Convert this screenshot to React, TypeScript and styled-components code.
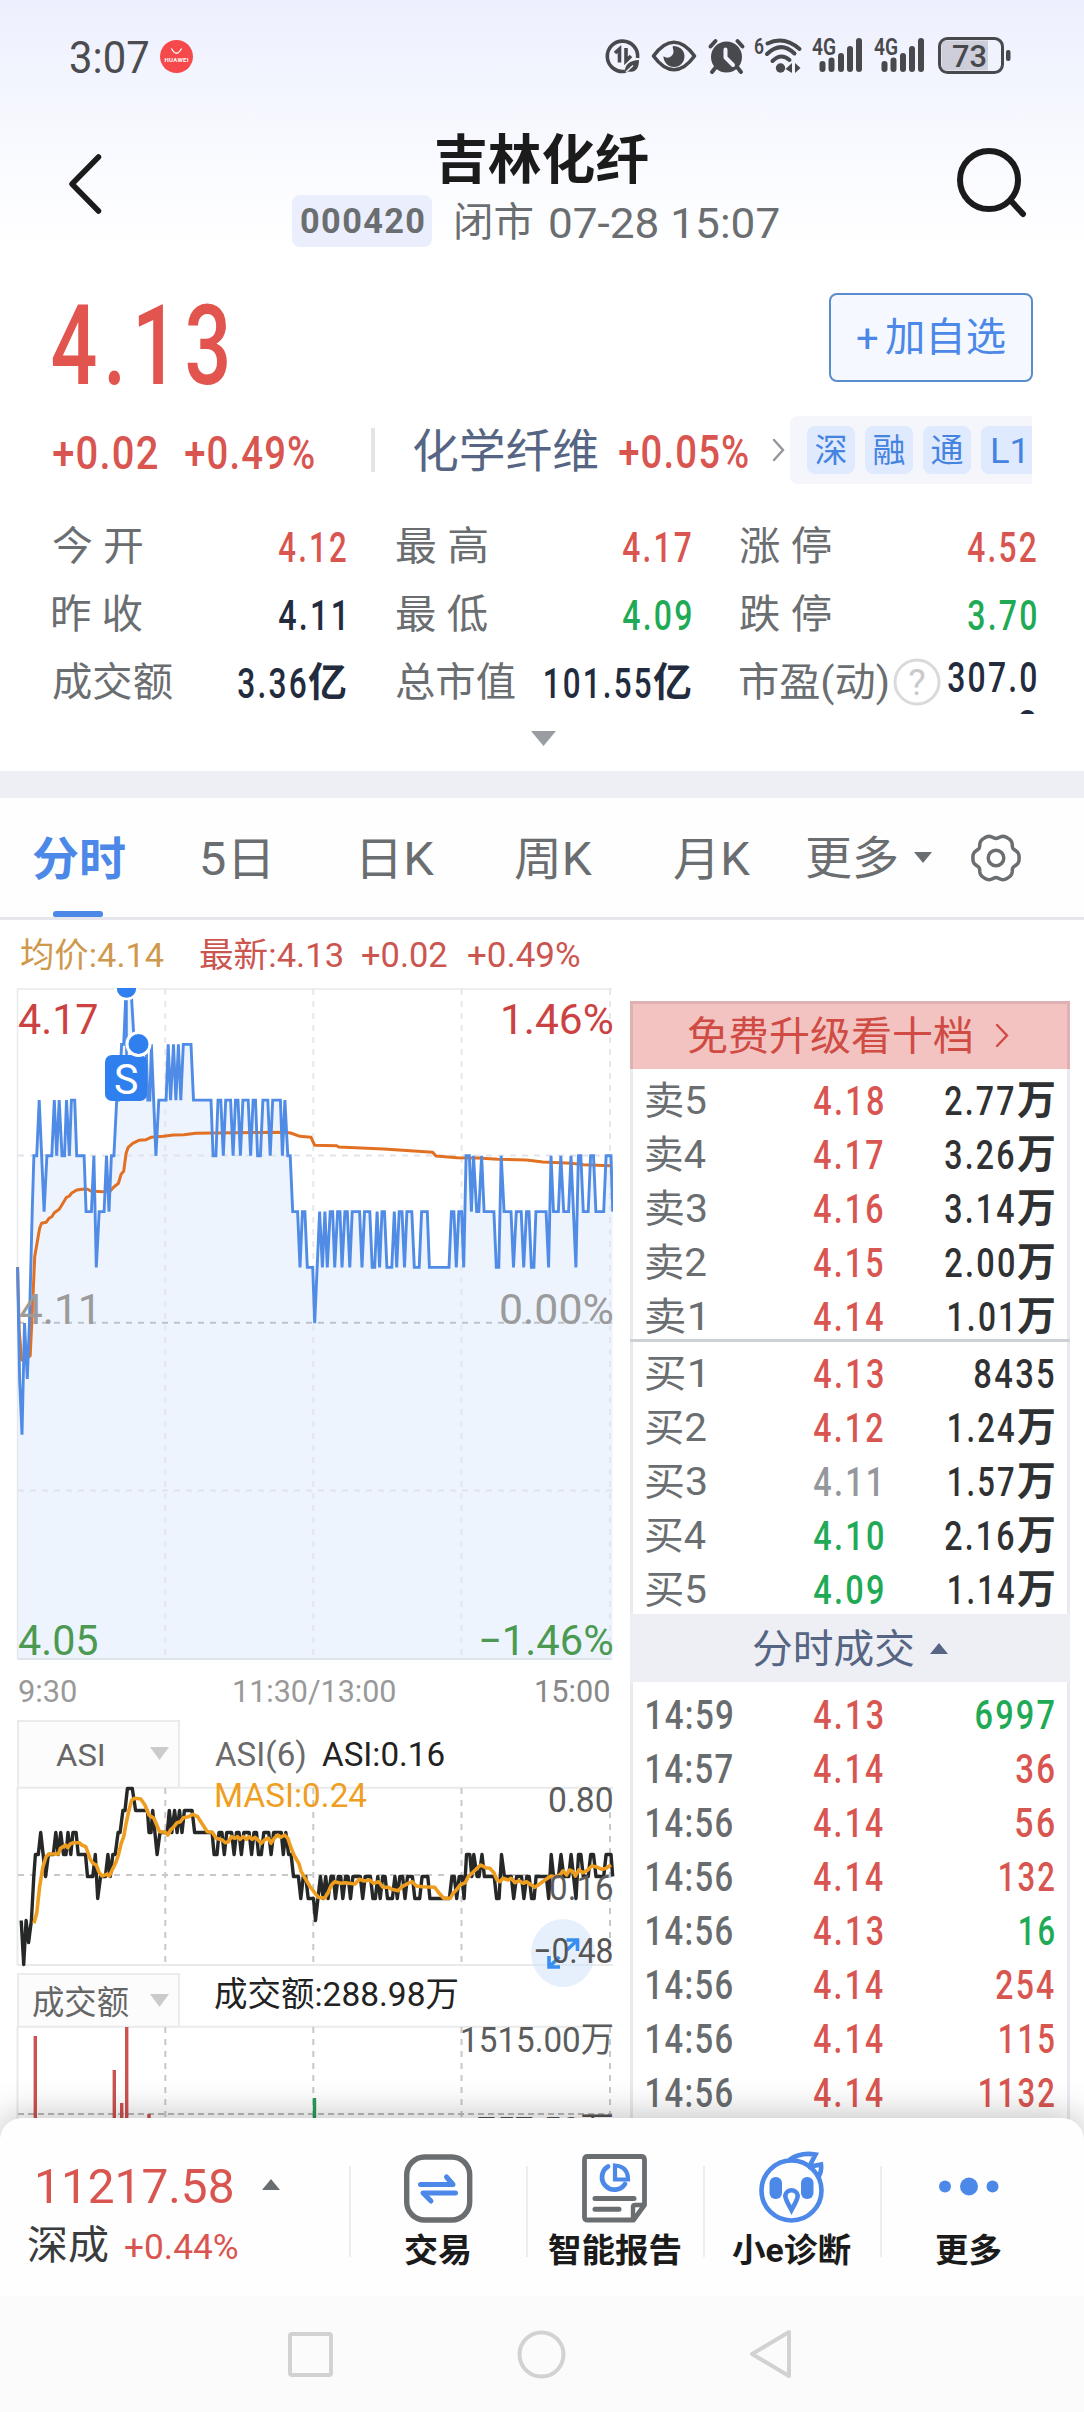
import React, { useLayoutEffect, useRef } from "react";
import styled, { createGlobalStyle } from "styled-components";

const FONT = 'Roboto, "Noto Sans CJK SC", sans-serif';

const C = {
  red: "#d95550",
  green: "#20aa56",
  blue: "#4c88e8",
  dark: "#232b3e",
  gray: "#6b6e71",
  slate: "#566583",
};

const Global = createGlobalStyle`
  * { box-sizing: border-box; }
  body { margin: 0; background: #fff; font-family: ${FONT}; }
  svg { display: block; flex: none; overflow: visible; }
`;

/* ---------- text whose ink is fitted to a given width ---------- */

const FitBox = styled.span<{ $w: number; $ml: number; $size: number; $weight: number; $color: string }>`
  display: inline-block;
  flex: none;
  width: ${(p) => p.$w}px;
  margin-left: ${(p) => p.$ml}px;
  height: ${(p) => Math.round(p.$size * 1.2)}px;
  line-height: ${(p) => Math.round(p.$size * 1.2)}px;
  font-size: ${(p) => p.$size}px;
  font-weight: ${(p) => p.$weight};
  color: ${(p) => p.$color};
  white-space: pre;
`;

const FitInner = styled.span<{ $ls: number }>`
  display: inline-block;
  transform-origin: 0 50%;
  letter-spacing: ${(p) => p.$ls}px;
`;

type FitProps = {
  t: string;
  w: number;
  size: number;
  weight?: number;
  color?: string;
  ml?: number;
  dy?: number;
  ls?: number;
};

function Fit({ t, w, size, weight = 400, color = C.gray, ml = 0, dy = 1, ls = 0 }: FitProps) {
  const ref = useRef<HTMLSpanElement>(null);
  const track = ls * size;
  useLayoutEffect(() => {
    const el = ref.current;
    const ctx = document.createElement("canvas").getContext("2d");
    if (!el || !ctx) return;
    ctx.font = `${weight} ${size}px ${FONT}`;
    const m = ctx.measureText(t);
    const ink = m.actualBoundingBoxLeft + m.actualBoundingBoxRight + track * (t.length - 1);
    const s = w / ink;
    el.style.transform = `translate(${m.actualBoundingBoxLeft * s}px, ${dy}px) scaleX(${s})`;
  }, [t, w, size, weight, dy, track]);
  return (
    <FitBox $w={w} $ml={ml} $size={size} $weight={weight} $color={color}>
      <FitInner ref={ref} $ls={track}>{t}</FitInner>
    </FitBox>
  );
}

/* condensed, slightly tracked figures used for quotes */
const Num = (p: FitProps) => <Fit weight={500} ls={0.07} {...p} />;

/* ---------- layout parts ---------- */

const Page = styled.div`
  width: 1084px;
  height: 2412px;
  overflow: hidden;
  display: flex;
  flex-direction: column;
  background: linear-gradient(#edeffe 0, #f3f5fe 80px, #fafbff 170px, #fff 255px);
`;

const Row = styled.div<{ $h: number; $pl?: number }>`
  display: flex;
  align-items: center;
  flex: none;
  height: ${(p) => p.$h}px;
  padding-left: ${(p) => p.$pl ?? 0}px;
`;

const Slot = styled.div<{ $ml?: number; $mt?: number }>`
  flex: none;
  margin-left: ${(p) => p.$ml ?? 0}px;
  margin-top: ${(p) => p.$mt ?? 0}px;
`;

const TitleColumn = styled.div`
  align-self: flex-start;
  width: 488px;
  margin-left: 190px;
  display: flex;
  flex-direction: column;
`;

const CodeBadge = styled.div`
  width: 140px;
  height: 52px;
  border-radius: 8px;
  background: #ebeffd;
  display: flex;
  align-items: center;
  justify-content: center;
`;

const AddButton = styled.div`
  width: 204px;
  height: 89px;
  margin-left: 602px;
  border: 2px solid #5a8dce;
  border-radius: 8px;
  background: #f5f9ff;
  display: flex;
  align-items: center;
  padding-left: 26px;
`;

const VLine = styled.div<{ $ml: number; $w: number; $h: number; $c: string }>`
  flex: none;
  width: ${(p) => p.$w}px;
  height: ${(p) => p.$h}px;
  margin-left: ${(p) => p.$ml}px;
  background: ${(p) => p.$c};
`;

const TagStrip = styled.div`
  width: 242px;
  height: 68px;
  margin-left: 5px;
  padding-left: 17px;
  border-radius: 8px 0 0 8px;
  background: #f4f6fb;
  display: flex;
  align-items: center;
  gap: 10px;
  overflow: hidden;
`;

const Tag = styled.div`
  flex: none;
  width: 48px;
  height: 48px;
  border-radius: 8px;
  background: #dfeafe;
  display: flex;
  align-items: center;
  justify-content: center;
  &:last-child { width: 60px; padding-right: 8px; }
`;

const Stats = styled.div`
  flex: none;
  height: 202px;
  margin-top: 16px;
  padding-left: 53px;
  display: grid;
  grid-template-columns: 343px 344px 296px;
  grid-auto-rows: 68px;
  overflow: hidden;
`;

const Stat = styled.div<{ $w: number }>`
  width: ${(p) => p.$w}px;
  height: 68px;
  display: flex;
  align-items: center;
`;

const StatValue = styled.div<{ $pr: number }>`
  margin-left: auto;
  padding-right: ${(p) => p.$pr}px;
  display: flex;
  align-items: center;
`;

const WrappedValue = styled.div`
  margin-left: auto;
  display: flex;
  flex-direction: column;
  align-items: flex-end;
  height: 68px;
  padding-top: 5px;
`;

const Band = styled.div`
  flex: none;
  height: 27px;
  background: #eeeff5;
`;

const Tabs = styled(Row)`
  border-bottom: 3px solid #e5e7ec;
  background: #fefefe;
`;

const ActiveTab = styled.div`
  display: flex;
  flex-direction: column;
  width: 92px;
  height: 119px;
  padding-top: 32px;
  justify-content: space-between;
  &::after {
    content: "";
    width: 50px;
    height: 6px;
    margin-left: 20px;
    border-radius: 3px 3px 2px 2px;
    background: ${C.blue};
  }
`;

const Main = styled.div`
  flex: none;
  height: 1152px;
  display: flex;
  align-items: flex-start;
  overflow: hidden;
`;

const Left = styled.div`
  width: 613px;
  flex: none;
`;

const Plot = styled.div<{ $h: number }>`
  position: relative;
  height: ${(p) => p.$h}px;
`;

const Over = styled.div<{ $y: number; $left?: boolean }>`
  position: absolute;
  top: ${(p) => p.$y}px;
  ${(p) => (p.$left ? "left: 0;" : "right: 1px;")}
  transform: translateY(-50%);
  display: flex;
`;

const SellMark = styled.div`
  position: absolute;
  left: 105px;
  top: 67px;
  width: 42px;
  height: 46px;
  border-radius: 7px;
  background: #2f80ee;
  display: flex;
  align-items: center;
  justify-content: center;
`;

const ExpandButton = styled.div`
  position: absolute;
  left: 531px;
  top: 132px;
  width: 64px;
  height: 68px;
  border-radius: 50%;
  background: rgba(205, 226, 250, 0.5);
`;

const IndicatorHead = styled.div<{ $h: number }>`
  display: flex;
  align-items: center;
  height: ${(p) => p.$h}px;
  padding-left: 17px;
`;

const Picker = styled.div<{ $pl: number }>`
  flex: none;
  width: 163px;
  height: 100%;
  padding-left: ${(p) => p.$pl}px;
  border: 2px solid #ebebeb;
  border-bottom: 0;
  background: #fcfcfc;
  display: flex;
  align-items: center;
`;

const Panel = styled.div`
  flex: none;
  width: 440px;
  margin: 13px 0 0 17px;
  height: 1140px;
  border: solid #e9eaef;
  border-width: 0 3px;
`;

const Upgrade = styled.div`
  height: 68px;
  margin: 0 -3px;
  padding-left: 55px;
  background: #f2c3c1;
  border: 3px solid #dfb1b4;
  border-bottom: 0;
  display: flex;
  align-items: center;
`;

const Orders = styled.div<{ $line?: boolean; $pt: number; $h: number }>`
  height: ${(p) => p.$h}px;
  padding-top: ${(p) => p.$pt}px;
  margin: 0 -3px;
  border-bottom: ${(p) => (p.$line ? "3px solid #cdd1d5" : "0")};
`;

const Line = styled.div`
  height: 54px;
  padding: 0 16px;
  display: grid;
  grid-template-columns: 168px 69px 1fr;
  align-items: center;
`;

const RightCell = styled.div`
  display: flex;
  justify-content: flex-end;
`;

const DealsHead = styled.div`
  height: 68px;
  margin: 0 -3px;
  padding-left: 123px;
  background: #eeeff5;
  display: flex;
  align-items: center;
`;

const BottomBar = styled.div`
  position: relative;
  flex: none;
  height: 178px;
  margin-top: -22px;
  border-radius: 22px 22px 0 0;
  background: #fefefe;
  box-shadow: 0 -2px 36px rgba(0, 0, 0, 0.26);
  display: flex;
`;

const IndexBox = styled.div`
  width: 349px;
  padding-top: 37px;
`;

const Action = styled.div`
  position: relative;
  width: 177px;
  height: 178px;
  padding-top: 31px;
  display: flex;
  flex-direction: column;
  align-items: center;
  &::before {
    content: "";
    position: absolute;
    left: 0;
    top: 48px;
    width: 2px;
    height: 91px;
    background: #ededed;
  }
`;

const IconArea = styled.div`
  height: 79px;
  display: flex;
`;

const NavBar = styled.div`
  position: relative;
  flex: none;
  height: 116px;
  padding-left: 288px;
  background: #fbfbfb;
  display: flex;
  align-items: center;
`;

/* ---------- icons ---------- */

const INK = "#48494c";

const Tri = ({ w, h, c, up }: { w: number; h: number; c: string; up?: boolean }) => (
  <svg width={w} height={h} viewBox="0 0 10 10" preserveAspectRatio="none">
    <path d={up ? "M0 10H10L5 0Z" : "M0 0H10L5 10Z"} fill={c} />
  </svg>
);

const Chevron = ({ w, h, c, s }: { w: number; h: number; c: string; s: number }) => (
  <svg width={w} height={h} viewBox={`0 0 ${w} ${h}`}>
    <path d={`M2 2L${w - 2} ${h / 2}L2 ${h - 2}`} fill="none" stroke={c} strokeWidth={s} strokeLinecap="round" />
  </svg>
);

const Signal = () => (
  <svg width="52" height="38" viewBox="0 0 52 38">
    <text x="0" y="17.500" fontSize="23" fontWeight="600" fill={INK} textLength="24" lengthAdjust="spacingAndGlyphs" fontFamily="Roboto, sans-serif">4G</text>
    <g fill={INK}>
      <rect x="7.500" y="24" width="6" height="11" rx="3" />
      <rect x="16.500" y="20.500" width="6" height="14.500" rx="3" />
      <rect x="26" y="16" width="6" height="19" rx="3" />
      <rect x="35" y="9" width="6" height="26" rx="3" />
      <rect x="44" y="1" width="6" height="34" rx="3" />
    </g>
  </svg>
);

const StatusIcons = () => (
  <>
    <svg width="36" height="36" viewBox="0 0 36 36">
      <path d="M20 33.3A15.2 15.2 0 1 1 32.6 20" fill="none" stroke={INK} strokeWidth="3.6" />
      <path d="M10 15L14.500 11V24.500M21 10V23L26 18" fill="none" stroke={INK} strokeWidth="3.600" />
      <path d="M20 35C19 27 25 22 34 22C34 31 30 35 24 33.5Z" fill={INK} />
      <path d="M21 34L28 27.500" stroke="#f1f3fe" strokeWidth="1.500" />
    </svg>
    <Slot $ml={10}>
      <svg width="46" height="32" viewBox="0 0 46 32">
        <path d="M2.500 16C9 7 15.500 2.300 23 2.300S37 7 43.500 16C37 25 30.500 29.700 23 29.700S9 25 2.500 16Z" fill="none" stroke={INK} strokeWidth="3.6" strokeLinejoin="round" />
        <path d="M22 6A10.500 10.500 0 1 1 12.500 16C16 19.500 22 17 22.500 12C22.800 9.500 21 7.500 22 6Z" fill={INK} />
      </svg>
    </Slot>
    <Slot $ml={11}>
      <svg width="37" height="36" viewBox="0 0 37 36">
        <circle cx="18.500" cy="19" r="15.500" fill={INK} />
        <path d="M2.500 8.500L7.500 3M34.500 8.500L29.500 3M8 29L4 34M29 29L33 34" stroke={INK} strokeWidth="4" strokeLinecap="round" />
        <path d="M17.500 11.500V19.500L25 27" fill="none" stroke="#f1f3fe" strokeWidth="4" strokeLinecap="round" strokeLinejoin="round" />
      </svg>
    </Slot>
    <Slot $ml={9}>
      <svg width="49" height="38" viewBox="0 0 49 38">
        <text x="0" y="17" fontSize="22" fontWeight="600" fill={INK} textLength="10" lengthAdjust="spacingAndGlyphs" fontFamily="Roboto, sans-serif">6</text>
        <g fill="none" stroke={INK} strokeWidth="4" strokeLinecap="round">
          <path d="M13.500 6.500Q30 -1.500 45.500 12" />
          <path d="M13 17Q27 3.500 40.500 16.500" />
          <path d="M18.500 24Q27 15.500 35.500 23" />
        </g>
        <circle cx="26.500" cy="31" r="4.700" fill={INK} />
        <path d="M31.500 32L38 26V36M41 26V36L46.500 31Z" fill={INK} />
      </svg>
    </Slot>
    <Slot $ml={9}><Signal /></Slot>
    <Slot $ml={10}><Signal /></Slot>
    <Slot $ml={12}>
      <svg width="74" height="38" viewBox="0 0 74 38">
        <rect x="1.500" y="1.500" width="63" height="34" rx="8" fill="#f0f2fd" stroke={INK} strokeWidth="3" />
        <path d="M9 3.500H50V33.500H9Q3.500 33.500 3.500 28V9Q3.500 3.500 9 3.500Z" fill="#cdced9" />
        <rect x="68" y="13" width="4.500" height="11" rx="2" fill={INK} />
        <text x="14" y="29.500" fontSize="31" fontWeight="500" fill={INK} textLength="35" lengthAdjust="spacingAndGlyphs" fontFamily="Roboto, sans-serif">73</text>
      </svg>
    </Slot>
  </>
);

const gearPath = (() => {
  const pts: string[] = [];
  for (let i = 0; i < 120; i++) {
    const a = (i / 120) * Math.PI * 2;
    const r = 21.8 + 1.8 * Math.cos(6 * a) - 0.5 * Math.cos(12 * a);
    pts.push(`${(26 + r * Math.cos(a)).toFixed(2)} ${(26 + r * Math.sin(a)).toFixed(2)}`);
  }
  return `M${pts.join("L")}Z`;
})();

/* ---------- intraday series: [x, price in cents over 4.00] ---------- */

const RAW =
  "43,12 48,10 54,9 60,11 67,10 72,11 79,13 83,14 90,14 96,15 108,13 115,14 127,14 133,15 139,14 145,15 152,14 158,14 163,15 170,14 175,15 183,15 188,14 206,14 211,13 224,13 230,14 236,12 243,13 255,13 261,14 267,13 273,14 279,14 286,15 291,15 298,16 303,16 309,17 321,17 329,16 358,16 362,15 367,15 371,16 382,14 389,15 407,15 412,16 418,15 425,16 431,15 437,16 443,15 449,16 468,16 474,15 517,15 522,14 529,14 534,15 541,15 547,14 553,15 565,15 571,14 577,15 583,15 589,14 595,15 608,15 614,14 620,15 626,15 631,14 638,14 644,15 656,15 662,14 668,15 687,15 692,14 698,15 705,14 711,14 717,13 729,13 735,12 741,13 747,13 753,12 766,12 771,11 783,13 790,12 796,13 802,12 809,13 815,13 820,12 827,13 833,13 838,12 845,13 851,13 857,12 863,13 881,13 887,12 893,13 906,13 912,12 918,12 924,13 930,12 936,13 942,13 948,12 960,12 966,13 972,12 978,13 985,13 991,12 997,13 1009,13 1015,12 1027,12 1033,13 1047,13 1052,12 1100,12 1106,13 1112,13 1118,12 1124,13 1131,13 1136,12 1142,14 1150,14 1155,13 1160,14 1168,13 1173,13 1180,14 1186,13 1210,13 1216,12 1222,12 1228,14 1235,13 1252,13 1258,12 1265,13 1277,13 1283,12 1290,13 1296,13 1302,12 1308,12 1313,13 1338,13 1344,12 1350,14 1356,13 1368,13 1374,14 1381,13 1393,13 1399,14 1411,12 1417,14 1423,14 1429,13 1441,13 1447,14 1454,14 1460,13 1479,13 1485,14 1497,14 1501,13";
const AVG =
  "43,891 47,1080 53,1170 62,1168 74,1157 80,1000 85,860 92,810 97,775 102,760 113,757 120,745 127,740 133,728 145,718 152,704 163,682 170,678 175,670 188,660 206,657 215,658 222,663 252,665 270,663 279,651 290,640 297,612 303,604 309,550 314,532 325,520 340,511 358,509 370,502 400,499 425,495 450,494 480,490 520,489 700,487 712,489 735,499 762,502 771,526 825,527 830,531 940,537 1060,547 1068,558 1120,563 1170,564 1220,568 1290,570 1330,576 1400,580 1430,584 1497,587";
const MASI =
  "83,670 90,640 97,560 105,500 113,470 120,462 143,462 148,445 155,440 160,435 166,443 172,432 180,428 195,428 200,435 210,440 216,460 222,480 228,490 236,495 242,515 250,528 257,525 262,522 268,528 275,510 283,490 290,465 297,430 303,410 309,370 316,330 323,300 330,295 345,297 355,315 365,345 377,355 384,375 391,395 405,397 411,405 418,390 426,380 434,368 442,365 449,353 462,350 472,343 484,350 492,365 508,395 520,397 530,415 545,420 552,428 560,425 567,410 575,415 582,410 588,418 596,410 604,418 610,410 618,418 625,412 632,420 640,430 650,418 658,415 664,430 672,415 680,405 688,412 697,405 705,415 712,440 720,465 732,490 738,515 750,540 760,560 772,580 780,592 795,595 803,580 812,555 820,545 835,550 845,548 870,552 880,538 893,543 906,540 915,550 928,545 938,562 952,562 960,568 975,572 985,560 1000,550 1010,545 1020,558 1035,560 1065,562 1075,578 1087,595 1103,595 1110,580 1118,570 1127,555 1140,548 1147,530 1160,515 1170,503 1178,495 1190,503 1200,505 1210,518 1218,540 1225,545 1232,535 1245,540 1252,535 1262,548 1272,542 1282,550 1290,545 1302,555 1310,562 1322,552 1335,540 1350,528 1360,530 1372,525 1380,513 1388,525 1395,510 1404,515 1410,528 1418,510 1428,518 1438,512 1450,498 1460,500 1475,508 1485,505 1497,495";

const KX = 2.45;
const parse = (s: string) => s.split(" ").map((p) => p.split(",").map(Number));
const poly = (pts: number[][]) => pts.map(([x, y]) => `${x.toFixed(1)},${y.toFixed(1)}`).join(" ");
const series = parse(RAW);
const priceLine = poly(series.map(([x, l]) => [x / KX, (17 - l) * 55.75 + 0.6]));
const avgLine = poly(parse(AVG).map(([x, y]) => [x / KX, y / 3 - 18]));
const asiLine = poly(
  [[52, 11], [58, 9], [64, 11], [70, 10], [77, 11], ...series.slice(6)].map(([x, l], i) => [
    (i < 5 ? x : x + 4 * (1 - x / 1500)) / KX,
    (17 - l) * 22 + 1.5,
  ])
);
const masiLine = poly(parse(MASI).map(([x, y]) => [x / KX, y / 3 - 87]));
const GRID_X = [165.3, 313.3, 461.5, 610];

const PricePlot = () => (
  <svg width="613" height="672" viewBox="0 0 613 672" style={{ overflow: "hidden" }}>
    <polygon points={`17.500,671 ${priceLine} 612.5,671`} fill="#edf4fe" />
    <path d="M17.500 671V1H612" fill="none" stroke="#e8e9ec" strokeWidth="1.500" />
    <path d="M17.500 671H612" stroke="#dfe4ed" strokeWidth="2" />
    {GRID_X.map((x) => (
      <path key={x} d={`M${x} 1V671`} stroke="#dfe3ea" strokeOpacity=".85" strokeWidth="2" strokeDasharray="6 6" />
    ))}
    <path d="M18 167.500H612M18 502.500H612" stroke="#dfe3ea" strokeWidth="2" strokeDasharray="6 6" />
    <path d="M18 334.800H612" stroke="#bcc2cb" strokeWidth="2" strokeDasharray="6 6" />
    <polyline points={avgLine} fill="none" stroke="#e27022" strokeWidth="3" strokeLinejoin="round" />
    <polyline points={priceLine} fill="none" stroke="#508ce6" strokeWidth="2.900" />
    <path d="M126.500 0V70" stroke="#4a88e8" strokeWidth="2.5" />
    <circle cx="126.500" cy="0" r="11" fill="#2f80ee" stroke="#fff" strokeWidth="2.500" />
  </svg>
);

const AsiPlot = () => (
  <svg width="613" height="180" viewBox="0 0 613 180">
    <path d="M17.500 178V0.700H613M17.500 178H613" fill="none" stroke="#e9eaec" strokeWidth="2" />
    {GRID_X.map((x) => (
      <path key={x} d={`M${x} 1V178`} stroke="#c8c8c8" strokeWidth="2" strokeDasharray="6 6" />
    ))}
    <path d="M18 88H612" stroke="#c8c8c8" strokeWidth="2" strokeDasharray="6 6" />
    <polyline points={asiLine} fill="none" stroke="#262827" strokeWidth="3.400" strokeLinejoin="round" />
    <polyline points={masiLine} fill="none" stroke="#ee9d1e" strokeWidth="3.600" strokeLinejoin="round" />
  </svg>
);

const BARS = [
  [35.3, 10, "#cc5250"],
  [114.3, 44, "#cc5250"],
  [121.7, 77, "#cc5250"],
  [126.7, 1, "#cc5250"],
  [149, 88, "#cc5250"],
  [314.500, 72, "#2a9d58"],
] as [number, number, string][];

const VolumePlot = () => (
  <svg width="613" height="110" viewBox="0 0 613 110">
    <path d="M17.500 110V0.700H613" fill="none" stroke="#e9eaec" strokeWidth="2" />
    {GRID_X.map((x) => (
      <path key={x} d={`M${x} 1V110`} stroke="#c8c8c8" strokeWidth="2" strokeDasharray="6 6" />
    ))}
    <path d="M18 88H612" stroke="#bdbdbd" strokeWidth="2" strokeDasharray="6 4" />
    {BARS.map(([x, y, c]) => (
      <rect key={x} x={x - 1.700} y={y} width="3.400" height={110 - y} fill={c} />
    ))}
  </svg>
);

const TradeIcon = () => (
  <svg width="72" height="76" viewBox="0 0 72 76">
    <rect x="4.700" y="8" width="63" height="63" rx="18" fill="none" stroke={C.gray} strokeWidth="5.400" />
    <path d="M18.500 35.500H51L44.500 28M53.500 44H21L29 52" fill="none" stroke={C.blue} strokeWidth="5" strokeLinecap="round" strokeLinejoin="round" />
  </svg>
);

const ReportIcon = () => (
  <svg width="72" height="76" viewBox="0 0 72 76">
    <path d="M8 7.500H62Q65.500 7.500 65.500 11V56L54.500 71H8Q5.500 71 5.500 68V11Q5.500 7.500 8 7.500Z" fill="none" stroke={C.gray} strokeWidth="4.800" strokeLinejoin="round" />
    <path d="M54 70V58Q54 56 56 56H65" fill="none" stroke={C.gray} strokeWidth="4.400" />
    <path d="M16 49.500H55M16 60.300H40" stroke={C.gray} strokeWidth="5" strokeLinecap="round" />
    <path d="M29 17.500A12.500 12.500 0 1 0 46 35" fill="none" stroke={C.blue} strokeWidth="4.800" strokeLinecap="round" />
    <path d="M36 16.500V30.500H49Q49 17.500 36 16.500Z" fill="none" stroke={C.blue} strokeWidth="4.200" />
  </svg>
);

const BirdIcon = () => (
  <svg width="72" height="76" viewBox="0 0 72 76">
    <g fill="none" stroke={C.blue} strokeWidth="4.600">
      <circle cx="35.500" cy="41.500" r="30" />
      <path d="M33 11Q44 3 59.500 5.500L53 18M52 18L65 15.500Q66 22 62 29" />
      <path d="M35.500 61C31.500 53.500 29 50 29.300 46.500A6.300 6.300 0 0 1 41.700 46.500C42 50 39.500 53.500 35.500 61Z" />
    </g>
    <rect x="13.500" y="28" width="12.500" height="22" rx="6" fill={C.blue} />
    <rect x="45" y="28" width="12.500" height="22" rx="6" fill={C.blue} />
  </svg>
);

const MoreIcon = () => (
  <svg width="72" height="76" viewBox="0 0 72 76" fill={C.blue}>
    <circle cx="12" cy="37.500" r="6" />
    <circle cx="36" cy="37.500" r="9" />
    <circle cx="59.500" cy="37.500" r="6" />
  </svg>
);

/* ---------- data ---------- */

type StatT = { l: string; lw: number; v: string; vw: number; c: string; unit?: boolean };
const STATS: StatT[] = [
  { l: "今 开", lw: 89, v: "4.12", vw: 67, c: C.red },
  { l: "最 高", lw: 91, v: "4.17", vw: 68, c: C.red },
  { l: "涨 停", lw: 91, v: "4.52", vw: 68, c: C.red },
  { l: "昨 收", lw: 89, v: "4.11", vw: 64, c: C.dark },
  { l: "最 低", lw: 91, v: "4.09", vw: 68, c: C.green },
  { l: "跌 停", lw: 91, v: "3.70", vw: 68, c: C.green },
  { l: "成交额", lw: 119, v: "3.36", vw: 68, c: C.dark, unit: true },
  { l: "总市值", lw: 119, v: "101.55", vw: 106, c: C.dark, unit: true },
];
const STAT_W = [293, 295, 296];

const SELL = [["卖5", "4.18", "2.77"], ["卖4", "4.17", "3.26"], ["卖3", "4.16", "3.14"], ["卖2", "4.15", "2.00"], ["卖1", "4.14", "1.01"]];
const BUY = [["买1", "4.13", "8435"], ["买2", "4.12", "1.24"], ["买3", "4.11", "1.57"], ["买4", "4.10", "2.16"], ["买5", "4.09", "1.14"]];
const DEALS: [string, string, string, boolean?][] = [
  ["14:59", "4.13", "6997", true],
  ["14:57", "4.14", "36"],
  ["14:56", "4.14", "56"],
  ["14:56", "4.14", "132"],
  ["14:56", "4.13", "16", true],
  ["14:56", "4.14", "254"],
  ["14:56", "4.14", "115"],
  ["14:56", "4.14", "1132"],
];

const priceColor = (p: string) => (p === "4.11" ? "#94979b" : Number(p) < 4.11 ? C.green : C.red);
const priceWidth = (p: string) => (p === "4.11" ? 64 : 69);

const OrderLine = ({ d }: { d: string[] }) => {
  const lots = !d[2].includes(".");
  const lead = d[2].startsWith("1") ? 4 : 0;
  const tail = d[2].endsWith("1") ? 4 : 0;
  return (
    <Line>
      <Fit t={d[0]} w={d[0].endsWith("1") ? 56 : 60} size={39} />
      <Num t={d[1]} w={priceWidth(d[1])} size={40} color={priceColor(d[1])} dy={2} />
      <RightCell>
        <Num t={d[2]} w={lots ? 79 : 69 - lead - tail} size={40} color="#303133" dy={2} />
        {!lots && <Fit t="万" w={37} size={40} weight={700} color="#303133" ml={3 + tail} />}
      </RightCell>
    </Line>
  );
};

const dealWidth = (v: string) => v.length * 20 - 2 - (v.startsWith("1") ? 4 : 0);

export default function App() {
  return (
    <Page>
      <Global />
      <Row $h={112} $pl={71}>
        <Fit t="3:07" w={77} size={44} color="#4b4c50" dy={2} />
        <Slot $ml={12}>
          <svg width="33" height="33" viewBox="0 0 33 33">
            <circle cx="16.500" cy="16.500" r="16.500" fill="#f5494b" />
            <path d="M11.500 8.500Q16.500 18 21.500 8.500" fill="none" stroke="#fff" strokeWidth="1.300" />
            <text x="4.500" y="22" fontSize="6" fontWeight="700" fill="#fff" textLength="24" fontFamily="Roboto, sans-serif">HUAWEI</text>
          </svg>
        </Slot>
        <Slot $ml={412} />
        <StatusIcons />
      </Row>

      <Row $h={158} $pl={66}>
        <Slot $mt={-14}>
          <svg width="36" height="62" viewBox="0 0 36 62">
            <path d="M32.500 4L6 31L32.500 58" fill="none" stroke="#1b1b1b" strokeWidth="5.500" strokeLinecap="round" strokeLinejoin="round" />
          </svg>
        </Slot>
        <TitleColumn>
          <Row $h={83}>
            <Fit t="吉林化纤" w={211} size={53} weight={700} color="#1b1b1b" ml={145} dy={7} />
          </Row>
          <Row $h={52}>
            <CodeBadge><Fit t="000420" w={123} size={35} weight={700} ls={0.04} /></CodeBadge>
            <Fit t="闭市" w={77} size={40} ml={24} dy={2} />
            <Fit t="07-28 15:07" w={229} size={43} ml={17} dy={2} />
          </Row>
        </TitleColumn>
        <Slot $ml={174} $mt={-16}>
          <svg width="76" height="76" viewBox="0 0 76 76">
            <circle cx="35" cy="35" r="29" fill="none" stroke="#1b1b1b" strokeWidth="6" />
            <path d="M58 57L69 69" stroke="#1b1b1b" strokeWidth="6" strokeLinecap="round" />
          </svg>
        </Slot>
      </Row>

      <Row $h={134} $pl={52}>
        <Num t="4.13" w={175} size={111} color="#e2554f" dy={9} />
        <AddButton>
          <Fit t="+" w={20} size={38} color={C.blue} dy={2} />
          <Fit t="加自选" w={119} size={40} color={C.blue} ml={9} />
        </AddButton>
      </Row>

      <Row $h={92} $pl={53}>
        <Num t="+0.02" w={104} size={47} color={C.red} dy={2.5} ls={0.03} />
        <Num t="+0.49%" w={129} size={47} color={C.red} ml={28} dy={2.5} ls={0.03} />
        <VLine $ml={57} $w={4} $h={44} $c="#e3e4e7" />
        <Fit t="化学纤维" w={185} size={46} color={C.slate} ml={38} />
        <Num t="+0.05%" w={129} size={47} color={C.red} ml={21} dy={2} ls={0.03} />
        <Slot $ml={24}><Chevron w={13} h={24} c="#929599" s={2.4} /></Slot>
        <TagStrip>
          <Tag><Fit t="深" w={31} size={33} color="#4583e0" /></Tag>
          <Tag><Fit t="融" w={31} size={33} color="#4583e0" /></Tag>
          <Tag><Fit t="通" w={31} size={33} color="#4583e0" /></Tag>
          <Tag><Fit t="L1" w={31} size={35} color="#4583e0" dy={2} /></Tag>
        </TagStrip>
      </Row>

      <Stats>
        {STATS.map((s, i) => (
          <Stat key={s.l} $w={STAT_W[i % 3]}>
            <Fit t={s.l} w={s.lw} size={40} />
            <StatValue $pr={s.v === "4.11" ? 3 : 0}>
              <Num t={s.v} w={s.vw} size={42} color={s.c} dy={2} />
              {s.unit && <Fit t="亿" w={38} size={40} weight={700} color={s.c} ml={2} />}
            </StatValue>
          </Stat>
        ))}
        <Stat $w={296}>
          <Fit t="市盈(动)" w={148} size={40} />
          <Slot $ml={5}>
            <svg width="48" height="48" viewBox="0 0 48 48">
              <circle cx="24" cy="24" r="22" fill="none" stroke="#d9dadb" strokeWidth="3" />
              <text x="24" y="37" fontSize="37" textAnchor="middle" fill="#c9cacc" fontFamily="Roboto, sans-serif">?</text>
            </svg>
          </Slot>
          <WrappedValue>
            <Num t="307.0" w={88} size={42} color={C.dark} dy={0} />
            <Num t="0" w={17} size={42} color={C.dark} dy={-2} />
          </WrappedValue>
        </Stat>
      </Stats>

      <Row $h={57} $pl={531}>
        <Slot $mt={-8}><Tri w={25} h={15} c="#999da1" /></Slot>
      </Row>

      <Band />

      <Tabs $h={122} $pl={33}>
        <ActiveTab><Fit t="分时" w={92} size={46} weight={700} color={C.blue} dy={2} /></ActiveTab>
        <Fit t="5日" w={66} size={46} ml={77} dy={2} />
        <Fit t="日K" w={71} size={46} ml={95} dy={2} />
        <Fit t="周K" w={77} size={46} ml={81} dy={2} />
        <Fit t="月K" w={76} size={46} ml={82} dy={2} />
        <Fit t="更多" w={90} size={46} ml={57} />
        <Slot $ml={17}><Tri w={18} h={11} c={C.gray} /></Slot>
        <Slot $ml={38}>
          <svg width="52" height="52" viewBox="0 0 52 52" fill="none" stroke={C.gray} strokeWidth="3.500">
            <path d={gearPath} />
            <circle cx="26" cy="26" r="7.800" />
          </svg>
        </Slot>
      </Tabs>

      <Row $h={68} $pl={21}>
        <Fit t="均价:4.14" w={143} size={34} color="#cf994d" />
        <Fit t="最新:4.13" w={142} size={34} color="#cb5650" ml={36} />
        <Fit t="+0.02" w={85} size={35} color="#cb5650" ml={20} dy={2} />
        <Fit t="+0.49%" w={112} size={35} color="#cb5650" ml={21} dy={2} />
      </Row>

      <Main>
        <Left>
          <Plot $h={672}>
            <PricePlot />
            <Over $y={30} $left><Fit t="4.17" w={78} size={42} color="#cc4242" ml={19} dy={2} /></Over>
            <Over $y={30}><Fit t="1.46%" w={109} size={42} color="#cc4242" dy={2} /></Over>
            <Over $y={320} $left><Fit t="4.11" w={73} size={42} color="#9b9b9b" ml={20} dy={2} /></Over>
            <Over $y={320}><Fit t="0.00%" w={111} size={42} color="#9b9b9b" dy={2} /></Over>
            <Over $y={652} $left><Fit t="4.05" w={78} size={42} color="#4c9a51" ml={19} /></Over>
            <Over $y={652}><Fit t="−1.46%" w={131} size={42} color="#4c9a51" /></Over>
            <SellMark><Fit t="S" w={22} size={43} color="#fff" /></SellMark>
            <Over $y={56} $left>
              <Slot $ml={125}>
                <svg width="27" height="27" viewBox="0 0 27 27">
                  <circle cx="13.500" cy="13.500" r="11.500" fill="#2f80ee" stroke="#fff" strokeWidth="3" />
                </svg>
              </Slot>
            </Over>
          </Plot>
          <Row $h={60} $pl={19}>
            <Fit t="9:30" w={57} size={31} color="#999" />
            <Fit t="11:30/13:00" w={161} size={31} color="#999" ml={158} />
            <Fit t="15:00" w={73} size={31} color="#888" ml={141} />
          </Row>
          <IndicatorHead $h={67}>
            <Picker $pl={37}>
              <Fit t="ASI" w={47} size={32} color="#666" dy={0} />
              <Slot $ml={47} $mt={-2}><Tri w={19} h={13} c="#cbcbcb" /></Slot>
            </Picker>
            <Fit t="ASI(6)" w={90} size={34} color="#6a6a6a" ml={35} />
            <Fit t="ASI:0.16" w={122} size={34} color="#222" ml={17} />
          </IndicatorHead>
          <Plot $h={180}>
            <AsiPlot />
            <ExpandButton>
              <svg width="64" height="68" viewBox="0 0 64 68" fill="none" stroke="#3a8ef0" strokeWidth="3.600">
                <path d="M35.500 21H46.500V32M46 21.500L35.500 31.500M18 37V48H29M18.500 47.500L28.500 38" />
              </svg>
            </ExpandButton>
            <Over $y={8} $left><Fit t="MASI:0.24" w={151} size={34} color="#ee9f23" ml={216} dy={0} /></Over>
            <Over $y={14}><Fit t="0.80" w={63} size={35} color="#5c5c5c" dy={0} /></Over>
            <Over $y={102}><Fit t="0.16" w={62} size={35} color="#5c5c5c" dy={0} /></Over>
            <Over $y={164}><Fit t="−0.48" w={77} size={35} color="#555" /></Over>
          </Plot>
          <Slot $mt={6} />
          <IndicatorHead $h={53}>
            <Picker $pl={14}>
              <Fit t="成交额" w={96} size={33} color="#666" dy={2} />
              <Slot $ml={21}><Tri w={19} h={13} c="#cbcbcb" /></Slot>
            </Picker>
            <Fit t="成交额:288.98万" w={242} size={34} color="#222" ml={35} dy={-5} />
          </IndicatorHead>
          <Plot $h={110}>
            <VolumePlot />
            <Over $y={15}><Fit t="1515.00万" w={150} size={35} color="#5c5c5c" dy={0} /></Over>
            <Over $y={102}><Fit t="757.50万" w={134} size={34} color="#555" /></Over>
          </Plot>
        </Left>

        <Panel>
          <Upgrade>
            <Fit t="免费升级看十档" w={283} size={40} color="#cf4b43" dy={0} />
            <Slot $ml={24} $mt={-2}><Chevron w={14} h={25} c="#cf4b43" s={2.4} /></Slot>
          </Upgrade>
          <Orders $line $pt={4} $h={273}>
            {SELL.map((d) => <OrderLine key={d[0]} d={d} />)}
          </Orders>
          <Orders $pt={4} $h={272}>
            {BUY.map((d) => <OrderLine key={d[0]} d={d} />)}
          </Orders>
          <DealsHead>
            <Fit t="分时成交" w={161} size={40} color={C.slate} dy={2} />
            <Slot $ml={16}><Tri w={18} h={11} c={C.slate} up /></Slot>
          </DealsHead>
          <Orders $pt={4} $h={450}>
            {DEALS.map((d, i) => (
              <Line key={i}>
                <Num t={d[0]} w={85} size={41} color="#696c6f" ml={1} dy={2} ls={0.04} />
                <Num t={d[1]} w={69} size={41} color={C.red} dy={2} />
                <RightCell>
                  <Num t={d[2]} w={dealWidth(d[2])} size={41} color={d[3] ? C.green : C.red} dy={2} />
                </RightCell>
              </Line>
            ))}
          </Orders>
        </Panel>
      </Main>

      <BottomBar>
        <IndexBox>
          <Row $h={60} $pl={38}>
            <Fit t="11217.58" w={194} size={49} color={C.red} />
            <Slot $ml={30} $mt={-2}><Tri w={18} h={11} c={C.gray} up /></Slot>
          </Row>
          <Row $h={60} $pl={28}>
            <Fit t="深成" w={80} size={40} color="#3a3b3d" />
            <Fit t="+0.44%" w={113} size={35} color={C.red} ml={17} dy={3} />
          </Row>
        </IndexBox>
        <Action>
          <IconArea><TradeIcon /></IconArea>
          <Fit t="交易" w={65} size={33} weight={700} color="#1b1b1b" dy={3} />
        </Action>
        <Action>
          <IconArea><ReportIcon /></IconArea>
          <Fit t="智能报告" w={133} size={33} weight={700} color="#1b1b1b" dy={3} />
        </Action>
        <Action>
          <IconArea><BirdIcon /></IconArea>
          <Fit t="小e诊断" w={119} size={33} weight={700} color="#1b1b1b" dy={3} />
        </Action>
        <Action>
          <IconArea><MoreIcon /></IconArea>
          <Fit t="更多" w={65} size={33} weight={700} color="#1b1b1b" dy={3} />
        </Action>
      </BottomBar>

      <NavBar>
        <svg width="45" height="45" viewBox="0 0 45 45" fill="none" stroke="#d2d2d2" strokeWidth="4">
          <rect x="2" y="2" width="41" height="41" rx="2" />
        </svg>
        <Slot $ml={184}>
          <svg width="49" height="49" viewBox="0 0 49 49" fill="none" stroke="#d2d2d2" strokeWidth="4">
            <circle cx="24.500" cy="24.500" r="22" />
          </svg>
        </Slot>
        <Slot $ml={183}>
          <svg width="44" height="50" viewBox="0 0 44 50" fill="none" stroke="#d2d2d2" strokeWidth="4" strokeLinejoin="round">
            <path d="M40 3V47L3 25Z" />
          </svg>
        </Slot>
      </NavBar>
    </Page>
  );
}
